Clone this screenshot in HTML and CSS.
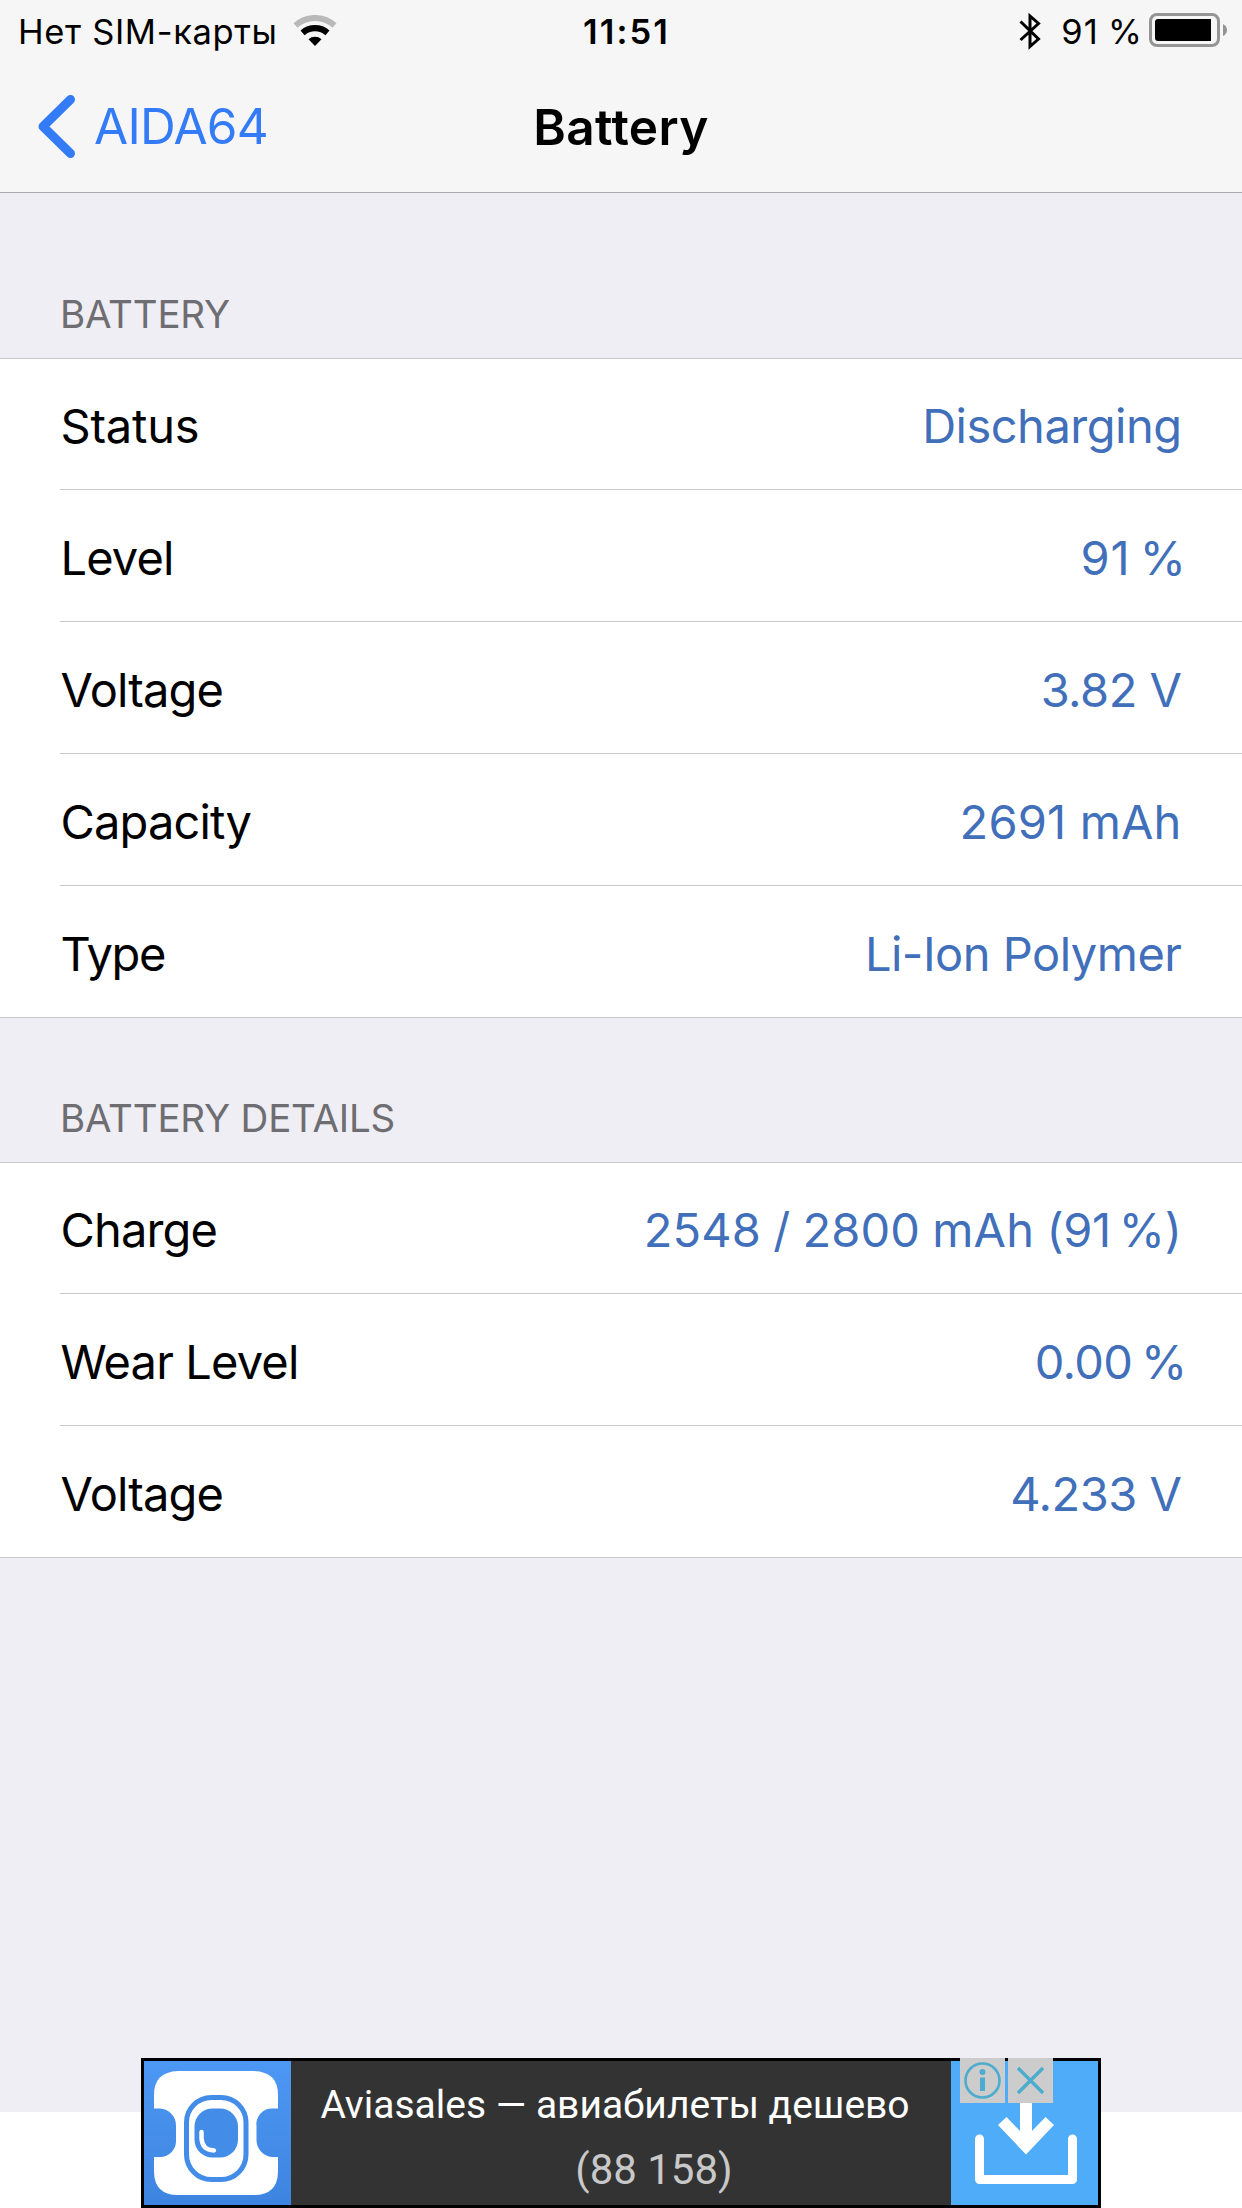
FILE: index.html
```html
<!DOCTYPE html>
<html lang="ru">
<head>
  <meta charset="UTF-8" />
  <meta name="viewport" content="width=device-width, initial-scale=1.0"/>
  <title>Battery</title>
  <link rel="stylesheet" href="styles.css">
</head>
<body>
  <!-- Status bar -->
  <div class="statusbar">
    <div class="status-left">
      <span class="carrier">Нет SIM-карты</span>
      <svg class="wifi" width="44" height="32" viewBox="0 0 44 32">
        <path d="M2.5 10.5A29 29 0 0 1 41.5 10.5" fill="none" stroke="#b9b9b9" stroke-width="6"/>
        <path d="M9.5 17.8A19 19 0 0 1 34.5 17.8" fill="none" stroke="#000" stroke-width="6.2"/>
        <path d="M15.5 24.2A10 10 0 0 1 28.5 24.2L22 31Z" fill="#000"/>
      </svg>
    </div>
    <div class="time">11:51</div>
    <div class="status-right">
      <svg class="bluetooth" width="22" height="38" viewBox="0 0 22 38">
        <path d="M1.5 9.5L19.5 27L11 34.5V4L19.5 11.5L1.5 28" fill="none" stroke="#000" stroke-width="3"/>
      </svg>
      <span class="percent">91&nbsp;%</span>
      <svg class="battery" width="78" height="34" viewBox="0 0 78 34">
        <rect x="1.5" y="1.5" width="68" height="31" rx="6.5" fill="none" stroke="#959595" stroke-width="3"/>
        <path d="M9 6H62V28H9Q6 28 6 25V9Q6 6 9 6Z" fill="#000"/>
        <path d="M74 11Q78 13 78 17T74 23Z" fill="#959595"/>
      </svg>
    </div>
  </div>

  <!-- Navigation -->
  <div class="navbar">
    <a class="back" href="#">
      <svg width="38" height="64" viewBox="0 0 38 64">
        <path d="M33.5 5.5L6 32.5L33.5 59.5" fill="none" stroke="#347bf8" stroke-width="9" stroke-linecap="round" stroke-linejoin="round"/>
      </svg>
      <span>AIDA64</span>
    </a>
    <h1>Battery</h1>
  </div>

  <div class="content">
    <h2 class="first">BATTERY</h2>
    <div class="list">
      <div class="row"><span class="label wide">Status</span><span class="value">Discharging</span></div>
      <div class="row"><span class="label">Level</span><span class="value level">91&nbsp;%</span></div>
      <div class="row"><span class="label">Voltage</span><span class="value">3.82 V</span></div>
      <div class="row"><span class="label">Capacity</span><span class="value capacity">2691 mAh</span></div>
      <div class="row"><span class="label tight">Type</span><span class="value">Li-Ion Polymer</span></div>
    </div>

    <h2>BATTERY DETAILS</h2>
    <div class="list">
      <div class="row"><span class="label">Charge</span><span class="value charge">2548 / 2800 mAh <span class="paren">(91&nbsp;%)</span></span></div>
      <div class="row"><span class="label">Wear Level</span><span class="value wear">0.00 %</span></div>
      <div class="row"><span class="label">Voltage</span><span class="value">4.233 V</span></div>
    </div>
  </div>

  <!-- Ad banner -->
  <div class="ad">
    <svg class="ad-logo" width="147" height="144" viewBox="0 0 147 144">
      <path d="M34 10H110Q134 11 134 34V47.5H128A15.5 15.5 0 0 0 112.5 65V79A17 17 0 0 0 128 96H134V110Q134 134 110 134H34Q10 134 10 110V96H16A16 16 0 0 0 32 79V65A17 17 0 0 0 16 47.5H10V34Q10 11 34 10Z" fill="#fff"/>
      <rect x="42.5" y="36.5" width="59.5" height="82" rx="25" fill="none" stroke="#438ce8" stroke-width="5"/>
      <rect x="50.5" y="47.5" width="43.5" height="49" rx="18" fill="#438ce8"/>
      <path d="M57.5 71V77Q58 89 70 89.5" fill="none" stroke="#fff" stroke-width="4.5" stroke-linecap="round"/>
    </svg>
    <div class="ad-text">
      <div class="ad-title">Aviasales — авиабилеты дешево</div>
      <div class="ad-count">(88 158)</div>
    </div>
    <svg class="ad-download" width="147" height="144" viewBox="0 0 147 144">
      <path d="M28.5 78V118.5H121.5V78" fill="none" stroke="#fff" stroke-width="9" stroke-linecap="round" stroke-linejoin="round"/>
      <path d="M69 30H81V70L94.5 56L103 64L75 93.5L47 64L55.5 56L69 70Z" fill="#fff"/>
    </svg>
    <div class="ad-choices">
      <svg width="45" height="45" viewBox="0 0 45 45">
        <circle cx="22.5" cy="22.5" r="17" fill="none" stroke="#4bacce" stroke-width="2.6"/>
        <circle cx="22.5" cy="14" r="3" fill="#4bacce"/>
        <rect x="20" y="19.5" width="5" height="13.5" fill="#4bacce"/>
      </svg>
      <svg width="45" height="45" viewBox="0 0 45 45">
        <path d="M10 10L35 35M35 10L10 35" stroke="#4bacce" stroke-width="3.4"/>
      </svg>
    </div>
  </div>
</body>
</html>
```

FILE: styles.css
```css
* {
  box-sizing: border-box;
}

body {
  font-family: Inter, sans-serif;
  margin: 0;
  height: 2208px;
  display: flex;
  flex-direction: column;
  overflow: hidden;
  background-color: #fff;
  color: #000;
}

.statusbar {
  display: grid;
  grid-template-columns: 1fr auto 1fr;
  height: 60px;
  padding: 0 15px 0 18px;
  background-color: #f6f6f6;
  font-size: 34.5px;
  line-height: 63px;
}

.status-left, .status-right {
  display: flex;
  align-items: flex-start;
}

.status-right {
  justify-content: flex-end;
}

.carrier {
  letter-spacing: 0.65px;
}

.wifi {
  margin: 15px 0 0 15px;
}

.time {
  margin-left: 8px;
  font-weight: 600;
  letter-spacing: 2.1px;
}

.bluetooth {
  margin: 12px 20px 0 0;
}

.percent {
  letter-spacing: 1.2px;
  word-spacing: -2px;
}

.battery {
  margin: 13px 0 0 6px;
}

.navbar {
  display: grid;
  grid-template-columns: 1fr auto 1fr;
  height: 133px;
  padding: 0 37px;
  background-color: #f6f6f6;
  border-bottom: 1px solid #a9a9ad;
  line-height: 132px;
}

.back {
  display: flex;
  color: #347bf8;
  font-size: 49.5px;
  letter-spacing: -0.7px;
  text-decoration: none;
}

.back svg {
  margin: 34px 19px 0 0;
}

h1 {
  margin: 0;
  font-size: 49.5px;
  font-weight: 600;
  letter-spacing: 0.4px;
  line-height: 134px;
}

.content {
  height: 1919px;
  background-color: #efeef4;
}

h2 {
  height: 144px;
  margin: 0;
  padding: 76px 0 0 60px;
  color: #6d6d72;
  font-size: 38.5px;
  font-weight: 400;
  letter-spacing: -0.2px;
  line-height: 48px;
}

h2.first {
  height: 165px;
  padding-top: 97px;
}

.list {
  background-color: #fff;
  border-top: 1px solid #c8c7cc;
  border-bottom: 1px solid #c8c7cc;
}

.row {
  display: flex;
  justify-content: space-between;
  height: 132px;
  margin-left: 60px;
  padding-right: 60px;
  border-bottom: 1px solid #c8c7cc;
  font-size: 47px;
  line-height: 136px;
}

.row:first-child {
  height: 131px;
  line-height: 134px;
}

.row:last-child {
  height: 131px;
  border-bottom: none;
}

.label {
  padding-left: 0.5px;
  letter-spacing: -0.85px;
}

.label.wide {
  letter-spacing: -0.2px;
}

.label.tight {
  letter-spacing: -1.4px;
}

.value {
  color: #416fba;
  padding-right: 0.5px;
  letter-spacing: -0.5px;
}

.value.level {
  margin-right: -5px;
  letter-spacing: 0.7px;
  word-spacing: -4.5px;
}

.value.capacity {
  letter-spacing: 0.15px;
}

.value.charge {
  letter-spacing: 0.1px;
  word-spacing: -1px;
}

.charge .paren {
  letter-spacing: -0.3px;
  word-spacing: -5px;
}

.value.wear {
  margin-right: -5px;
  letter-spacing: -0.6px;
  word-spacing: -4px;
}

.ad {
  position: absolute;
  left: 141px;
  bottom: 0;
  display: flex;
  width: 960px;
  height: 150px;
  border: 3px solid #000;
  background-color: #333;
}

.ad-logo {
  background: linear-gradient(#4d98f4, #3d84e0);
}

.ad-text {
  flex: 1;
  font-family: Roboto, sans-serif;
  text-align: center;
}

.ad-title {
  margin-top: 11px;
  padding-right: 12px;
  color: #fff;
  font-size: 39px;
  line-height: 66px;
  white-space: nowrap;
}

.ad-count {
  padding-left: 66px;
  color: #c8c8c8;
  font-size: 42px;
  line-height: 64px;
}

.ad-download {
  background-color: #4facf8;
}

.ad-choices {
  position: absolute;
  top: -3px;
  left: 816px;
  display: flex;
  gap: 3px;
}

.ad-choices svg {
  background-color: #ccc;
}
```
